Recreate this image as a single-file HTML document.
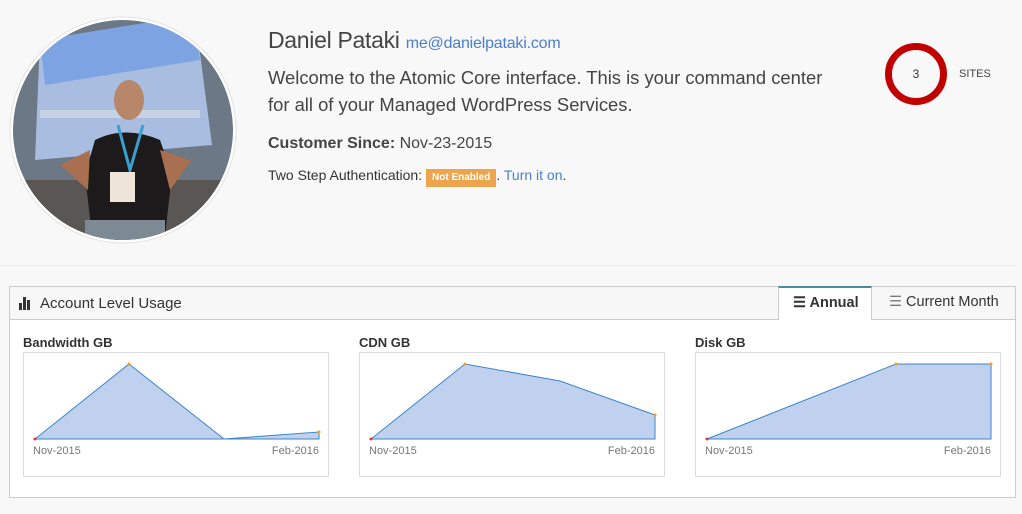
<!DOCTYPE html>
<html><head><style>
body{margin:0;width:1022px;height:514px;background:#f8f8f8;font-family:"Liberation Sans",sans-serif;color:#333;position:relative;overflow:hidden}
.a{position:absolute;white-space:nowrap}
</style></head><body>
<svg class="a" style="left:0;top:0" width="250" height="256">
<defs><clipPath id="c"><circle cx="123" cy="130" r="110"/></clipPath></defs>
<circle cx="123" cy="130" r="113" fill="#fff" stroke="#e2e2e2"/>
<g clip-path="url(#c)">
<rect x="0" y="0" width="250" height="256" fill="#6c7885"/>
<rect x="0" y="180" width="250" height="80" fill="#5a5654"/>
<polygon points="40,40 195,15 212,145 35,160" fill="#a9bde0"/>
<polygon points="40,40 195,15 200,60 45,85" fill="#7ea3e2"/>
<rect x="40" y="110" width="160" height="8" fill="#c7d2e4"/>
<path d="M95,140 Q125,125 160,140 L172,175 L165,235 L92,235 L85,175 Z" fill="#1c1a1a"/>
<path d="M90,150 L60,165 L55,160 L88,190 Z" fill="#a86f50"/>
<path d="M160,150 L190,160 L195,155 L170,190 Z" fill="#a86f50"/>
<ellipse cx="129" cy="100" rx="15" ry="20" fill="#b8876a"/>
<path d="M118,125 L130,170 L143,125" stroke="#3aa0d0" stroke-width="3" fill="none"/>
<rect x="110" y="172" width="25" height="30" fill="#eee4d8"/>
<rect x="85" y="220" width="80" height="30" fill="#7d8a94"/>
</g></svg>

<div class="a" style="left:268px;top:27px;font-size:23px;letter-spacing:-0.3px;color:#444">Daniel Pataki <span style="font-size:16px;letter-spacing:-0.2px;color:#4a7fd0">me@danielpataki.com</span></div>
<div class="a" style="left:268px;top:64px;font-size:18.4px;line-height:27px;color:#444">Welcome to the Atomic Core interface. This is your command center<br>for all of your Managed WordPress Services.</div>
<div class="a" style="left:268px;top:135px;font-size:16px;color:#444"><b>Customer Since:</b> Nov-23-2015</div>
<div class="a" style="left:268px;top:167px;font-size:14px;color:#333">Two Step Authentication: <span style="background:#eca54c;color:#fff;font-size:10px;font-weight:bold;padding:3px 6px 4px;display:inline-block">Not Enabled</span>. <span style="color:#4a7fd0">Turn it on</span>.</div>
<div class="a" style="left:885px;top:43px;width:48px;height:48px;border:7px solid #c10000;border-radius:50%;text-align:center;line-height:48px;font-size:12px">3</div>
<div class="a" style="left:959px;top:68px;font-size:11px;color:#444">SITES</div>
<div class="a" style="left:0;top:265px;width:1016px;border-top:1px solid #e8e8e8"></div>

<div class="a" style="left:9px;top:286px;width:1005px;height:210px;border:1px solid #ccc;background:#fff"></div>
<div class="a" style="left:10px;top:287px;width:1005px;height:32px;background:#f7f7f7;border-bottom:1px solid #ccc"></div>
<svg class="a" style="left:18px;top:296px" width="16" height="14"><rect x="1" y="7" width="3" height="7" fill="#333"/><rect x="5" y="1" width="3" height="13" fill="#333"/><rect x="9" y="4" width="3" height="10" fill="#333"/></svg>
<div class="a" style="left:40px;top:295px;font-size:15px;color:#333">Account Level Usage</div>
<div class="a" style="left:778px;top:286px;width:94px;height:34px;background:#fff;border-top:2px solid #4a8a9a;border-left:1px solid #ccc;border-right:1px solid #ccc;box-sizing:border-box"></div>
<div class="a" style="left:793px;top:295px;font-size:14.5px;font-weight:bold;color:#333">☰ Annual</div>
<div class="a" style="left:889px;top:294px;font-size:14.5px;color:#333"><span style="color:#777">☰</span> Current Month</div>

<div class="a" style="left:23px;top:335px;font-size:13px;font-weight:bold;color:#333">Bandwidth GB</div>
<div class="a" style="left:359px;top:335px;font-size:13px;font-weight:bold;color:#333">CDN GB</div>
<div class="a" style="left:695px;top:335px;font-size:13px;font-weight:bold;color:#333">Disk GB</div>
<svg class="a" style="left:0;top:0" width="1022" height="514">
<g fill="#fff" stroke="#ddd"><rect x="23.5" y="352.5" width="305" height="124"/><rect x="359.5" y="352.5" width="305" height="124"/><rect x="695.5" y="352.5" width="305" height="124"/></g>
<g fill="#c0d1f0" stroke="#3d85c6" stroke-width="1">
<polygon points="35,439 129,364 224,439 319,432 319,439"/>
<polygon points="371,439 465,364 560,381 655,415 655,439"/>
<polygon points="707,439 896,364 991,364 991,439"/></g>
<g fill="#e03030"><circle cx="35" cy="439" r="1.5"/><circle cx="371" cy="439" r="1.5"/><circle cx="707" cy="439" r="1.5"/></g>
<g fill="#f0a020"><circle cx="129" cy="364" r="1.5"/><circle cx="319" cy="432" r="1.5"/><circle cx="465" cy="364" r="1.5"/><circle cx="655" cy="415" r="1.5"/><circle cx="896" cy="364" r="1.5"/><circle cx="991" cy="364" r="1.5"/></g>
<g font-family="Liberation Sans,sans-serif" font-size="11" fill="#777">
<text x="33" y="454">Nov-2015</text><text x="319" y="454" text-anchor="end">Feb-2016</text>
<text x="369" y="454">Nov-2015</text><text x="655" y="454" text-anchor="end">Feb-2016</text>
<text x="705" y="454">Nov-2015</text><text x="991" y="454" text-anchor="end">Feb-2016</text></g>
</svg>
</body></html>
